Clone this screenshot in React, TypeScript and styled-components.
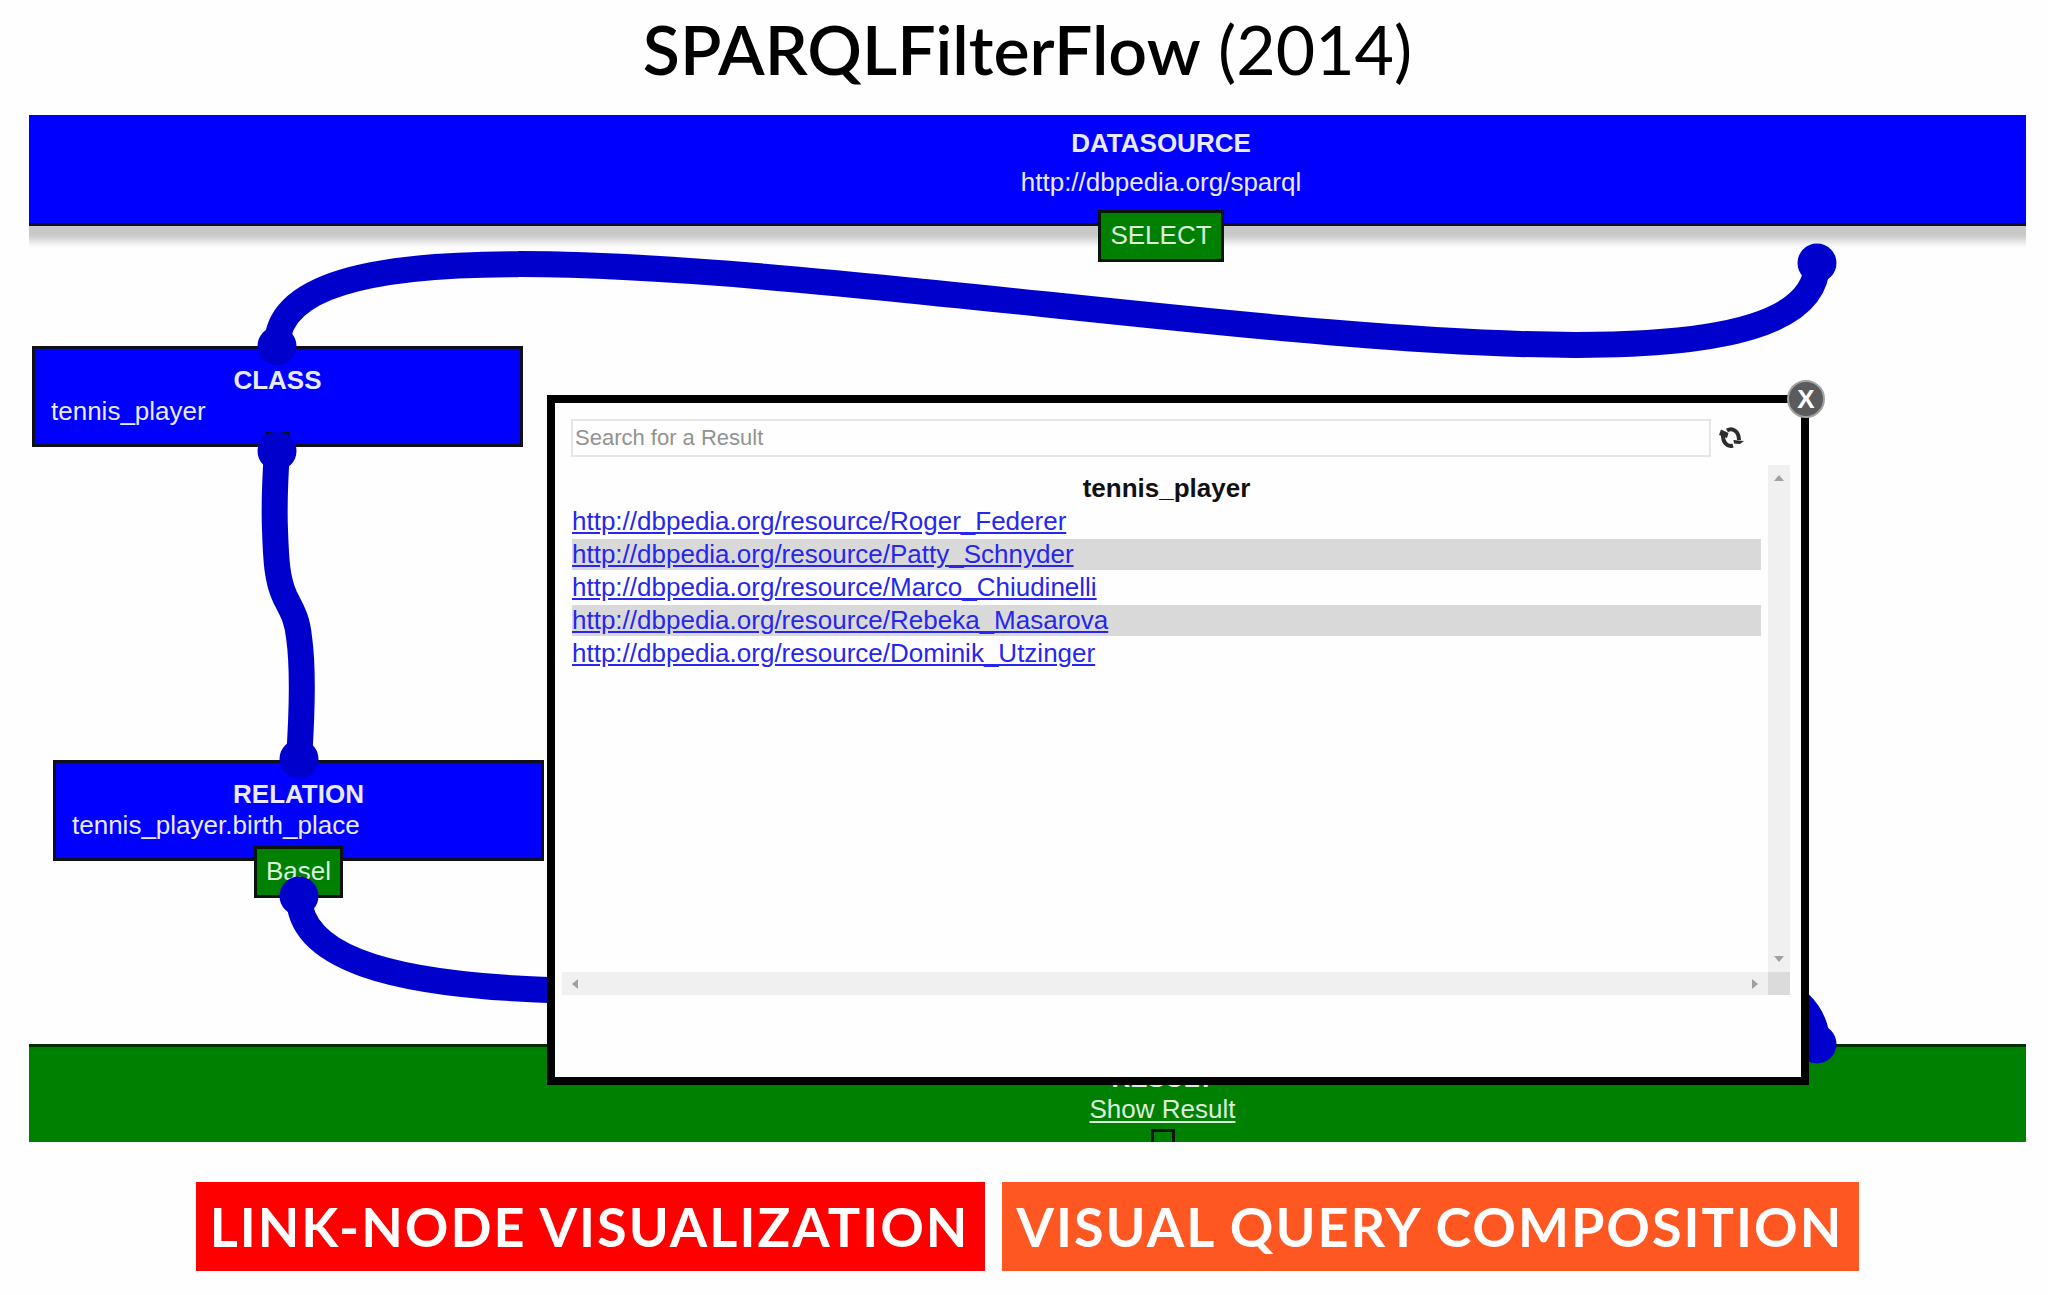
import React from "react";
import styled, { createGlobalStyle } from "styled-components";

const GlobalStyle = createGlobalStyle`
  *, *::before, *::after { box-sizing: border-box; }
  body { margin: 0; background: #fefefe; }
`;

const Page = styled.main`
  display: flex;
  flex-direction: column;
  padding: 0 22px 24px 29px;
  font-family: "Liberation Sans", Arial, sans-serif;
`;

const Title = styled.h1`
  margin: 0;
  padding-bottom: 18px;
  color: #000;
  font: 400 68px/97px Lato, sans-serif;
  text-align: center;

  b { font-weight: 600; }
`;

const Canvas = styled.section`
  position: relative;
  display: flex;
  flex-direction: column;
  justify-content: space-between;
  height: 1027px;
  overflow: hidden;
  color: #e9e9ff;
  font-size: 26px;
  line-height: 31px;
`;

const Bar = styled.div`
  display: flex;
  flex-direction: column;
  align-items: center;
`;

const SourceBar = styled(Bar)`
  height: 111px;
  padding: 13px 0 0 267px;
  gap: 8px;
  background: #00f;
  border-bottom: 3px solid #10101c;
  box-shadow: 0 7px 8px 8px #c8c8c8;
`;

const ResultBar = styled(Bar)`
  height: 98px;
  padding: 16px 0 0 270px;
  background: #008000;
  border-top: 3px solid #022c02;
  color: #dcefdc;
`;

const Badge = styled.span`
  flex: none;
  height: 52px;
  padding: 7px 9px;
  background: #008000;
  border: 3px solid #0a140a;
  color: #dcefdc;
`;

const SourceBadge = styled(Badge)`
  margin-top: 4px;
`;

const Port = styled.span<{ $fill: string }>`
  flex: none;
  width: 24px;
  height: 24px;
  background: ${(p) => p.$fill};
  border: 3px solid #0a140a;
`;

const Node = styled.div<{ $x: number; $y: number }>`
  position: absolute;
  left: ${(p) => p.$x}px;
  top: ${(p) => p.$y}px;
  display: flex;
  flex-direction: column;
  align-items: center;
  width: 491px;
  height: 101px;
  padding: 16px 16px 0;
  background: #00f;
  border: 3px solid #10101c;
`;

const NodeText = styled.span`
  align-self: stretch;
  margin-bottom: 5px;
`;

const ResultLink = styled.a`
  margin-bottom: 4px;
  color: inherit;
  text-underline-offset: 3px;
`;

const Wires = styled.svg`
  position: absolute;
  left: 0;
  top: 0;
`;

const Dialog = styled.section`
  position: absolute;
  left: 518px;
  top: 280px;
  display: flex;
  flex-direction: column;
  gap: 8px;
  width: 1262px;
  height: 690px;
  padding: 16px 11px 0 7px;
  background: #fefefe;
  border: 8px solid #000;
  color: #111;
`;

const CloseButton = styled.button`
  position: absolute;
  right: -24px;
  top: -23px;
  width: 38px;
  height: 38px;
  padding: 0;
  background: #5b5b5d;
  border: 2px solid #a2a2a2;
  border-radius: 50%;
  color: #fff;
  font: bold 26px/32px "Liberation Sans", Arial, sans-serif;
`;

const SearchRow = styled.form`
  display: flex;
  align-items: center;
  gap: 8px;
  padding: 0 46px 0 9px;
`;

const SearchInput = styled.input`
  flex: 1;
  min-width: 0;
  height: 38px;
  padding: 0 2px;
  background: transparent;
  border: 2px solid #e6e6e6;
  font: 22px "Liberation Sans", Arial, sans-serif;

  &::placeholder { color: #929292; opacity: 1; }
`;

const RefreshButton = styled.button`
  display: flex;
  padding: 0;
  background: none;
  border: 0;
`;

const ScrollPane = styled.div`
  display: grid;
  grid-template: 507px 23px / 1fr 22px;
`;

const TableArea = styled.div`
  padding: 6px 7px 0 10px;
`;

const Results = styled.table`
  width: 100%;
  border-collapse: separate;
  border-spacing: 0 2px;

  th, td { padding: 0; }
  td { text-align: left; }
  tbody tr:nth-child(even) { background: #d9d9d9; }
  a { color: #2626ee; }
`;

const Track = styled.div<{ $vertical?: boolean }>`
  display: flex;
  flex-direction: ${(p) => (p.$vertical ? "column" : "row")};
  align-items: center;
  justify-content: space-between;
  padding: ${(p) => (p.$vertical ? "7px 0" : "0 7px")};
  background: #f0f0f0;
`;

const Corner = styled.div`
  background: #dbdbdb;
`;

const Tags = styled.ul`
  display: flex;
  flex-wrap: wrap;
  justify-content: center;
  gap: 17px;
  margin: 40px 0 0;
  padding: 0;
  list-style: none;
`;

const Tag = styled.li<{ $color: string }>`
  padding: 0 16px 0 14px;
  background: ${(p) => p.$color};
  color: #fff;
  font: 700 54px/89px Lato, sans-serif;
  letter-spacing: 2px;
`;

const people = [
  "Roger_Federer",
  "Patty_Schnyder",
  "Marco_Chiudinelli",
  "Rebeka_Masarova",
  "Dominik_Utzinger",
];

const joints = [
  [1817, 263],
  [277, 346],
  [277, 451],
  [299, 759],
  [299, 896],
  [1817, 1044],
];

function Arrow({ turn }: { turn: number }) {
  return (
    <svg width="12" height="12" viewBox="0 0 12 12" aria-hidden="true">
      <path d="M1 9L6 3L11 9Z" fill="#a0a0a0" transform={`rotate(${turn} 6 6)`} />
    </svg>
  );
}

function RefreshIcon() {
  return (
    <svg width="25" height="24" viewBox="0 0 25 24" aria-hidden="true">
      <g fill="none" stroke="#2c2c2c" strokeWidth="4">
        <path d="M8 4.500C13 1.500 20 4.500 20 14" />
        <path d="M4 8C3.500 16 8 21.500 14 19.500" />
      </g>
      <path d="M0 9L2 3.500L9.500 7L8 12Z" fill="#2c2c2c" />
      <path d="M14.500 14L25 15L21 18L15 17.500Z" fill="#2c2c2c" />
    </svg>
  );
}

export default function App() {
  return (
    <Page>
      <GlobalStyle />
      <Title>
        <b>SPARQLFilterFlow</b> (2014)
      </Title>
      <Canvas>
        <SourceBar>
          <b>DATASOURCE</b>
          <span>http://dbpedia.org/sparql</span>
          <SourceBadge>SELECT</SourceBadge>
        </SourceBar>
        <Node $x={3} $y={231}>
          <b>CLASS</b>
          <NodeText>tennis_player</NodeText>
          <Port $fill="#00f" />
        </Node>
        <Node $x={24} $y={645}>
          <b>RELATION</b>
          <NodeText>tennis_player.birth_place</NodeText>
          <Badge>Basel</Badge>
        </Node>
        <ResultBar>
          <b>RESULT</b>
          <ResultLink href="#result">Show Result</ResultLink>
          <Port $fill="#008000" />
        </ResultBar>
        <Wires width="1997" height="1027" viewBox="29 115 1997 1027" aria-hidden="true">
          <g fill="none" stroke="#0000cd" strokeWidth="26">
            <path d="M277 346C277 101 1817 508 1817 263" />
            <path d="M277 451C275 480 274 505 275 530C276 560 277 580 285 597C292 611 297 618 299 637C303 665 303 700 299 759" />
            <path d="M299 896C299 1146 1817 794 1817 1044" />
          </g>
          {joints.map(([x, y]) => (
            <circle key={`${x}-${y}`} cx={x} cy={y} r="19.500" fill="#0000cd" />
          ))}
        </Wires>
        <Dialog role="dialog" aria-label="Results">
          <CloseButton type="button" aria-label="Close">X</CloseButton>
          <SearchRow onSubmit={(e) => e.preventDefault()}>
            <SearchInput type="text" placeholder="Search for a Result" aria-label="Search for a Result" />
            <RefreshButton type="button" aria-label="Refresh">
              <RefreshIcon />
            </RefreshButton>
          </SearchRow>
          <ScrollPane>
            <TableArea>
              <Results>
                <thead>
                  <tr>
                    <th scope="col">tennis_player</th>
                  </tr>
                </thead>
                <tbody>
                  {people.map((name) => (
                    <tr key={name}>
                      <td>
                        <a href={`#${name}`}>http://dbpedia.org/resource/{name}</a>
                      </td>
                    </tr>
                  ))}
                </tbody>
              </Results>
            </TableArea>
            <Track $vertical>
              <Arrow turn={0} />
              <Arrow turn={180} />
            </Track>
            <Track>
              <Arrow turn={270} />
              <Arrow turn={90} />
            </Track>
            <Corner />
          </ScrollPane>
        </Dialog>
      </Canvas>
      <Tags>
        <Tag $color="#f00">LINK-NODE VISUALIZATION</Tag>
        <Tag $color="#ff5722">VISUAL QUERY COMPOSITION</Tag>
      </Tags>
    </Page>
  );
}
